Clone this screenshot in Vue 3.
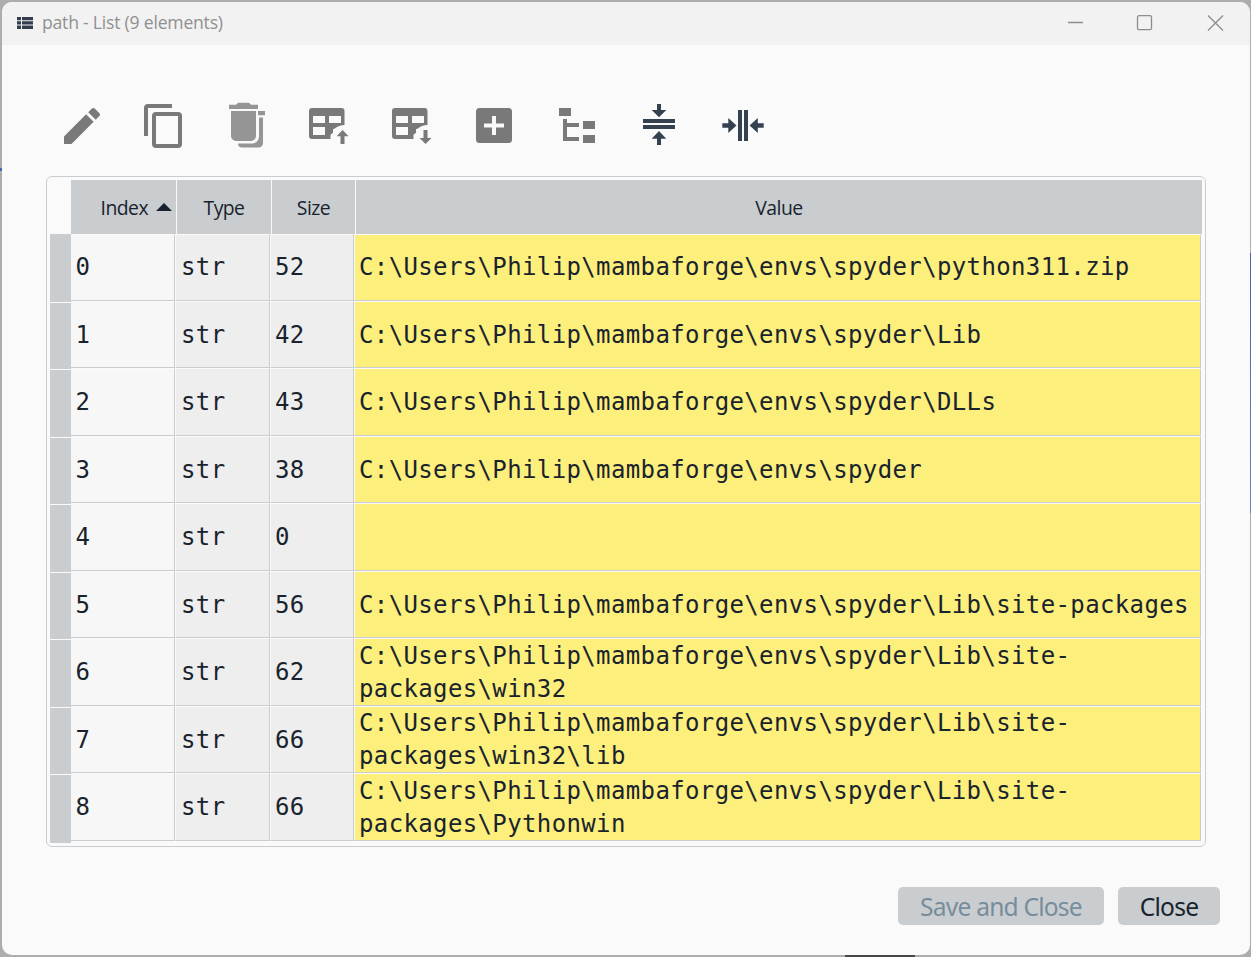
<script setup>
const base = 'C:\\Users\\Philip\\mambaforge\\envs\\spyder'
const rows = [
  { size: 52, value: base + '\\python311.zip' },
  { size: 42, value: base + '\\Lib' },
  { size: 43, value: base + '\\DLLs' },
  { size: 38, value: base },
  { size: 0, value: '' },
  { size: 56, value: base + '\\Lib\\site-packages' },
  { size: 62, value: base + '\\Lib\\site-\npackages\\win32' },
  { size: 66, value: base + '\\Lib\\site-\npackages\\win32\\lib' },
  { size: 66, value: base + '\\Lib\\site-\npackages\\Pythonwin' },
]
</script>

<template>
  <div class="desktop">
    <div class="window">
      <header class="titlebar">
        <svg class="list-icon" width="16" height="12" viewBox="0 0 16 12">
          <path d="M0 0h4v3.3H0zM5 0h11v3.3H5zM0 4.3h4v3.3H0zM5 4.3h11v3.3H5zM0 8.6h4V12H0zM5 8.6h11V12H5z" />
        </svg>
        <span class="title">path - List (9 elements)</span>
        <svg class="controls" width="157" height="16" viewBox="0 0 157 16">
          <path d="M0 7.500h15" />
          <rect x="69.5" y=".7" width="14" height="14" rx="1.5" />
          <path d="M140 .5l15 15M155 .5l-15 15" />
        </svg>
      </header>

      <nav class="toolbar">
        <svg viewBox="0 0 24 24"><path d="M20.71 7.04c.39-.39.39-1.04 0-1.41l-2.34-2.34c-.37-.39-1.02-.39-1.41 0l-1.84 1.83 3.75 3.75M3 17.25V21h3.750L17.81 9.93l-3.750-3.750z" /></svg>
        <svg viewBox="0 0 24 24"><path d="M19 21H8V7h11m0-2H8a2 2 0 0 0-2 2v14a2 2 0 0 0 2 2h11a2 2 0 0 0 2-2V7a2 2 0 0 0-2-2m-3-4H4a2 2 0 0 0-2 2v14h2V3h12z" /></svg>
        <svg class="light" viewBox="0 0 48 48"><path d="M6 2.700h7l2-2h11l2 2h7V7H6zM8 9h25v25a5 5 0 0 1-5 5H13a5 5 0 0 1-5-5zM35 9h7v4.300h-7zM36 15.500h4V41a4.500 4.500 0 0 1-4.500 4.500H19a4 4 0 0 1-4-4h14a7 7 0 0 0 7-7z" /></svg>
        <svg viewBox="0 0 48 48"><path fill-rule="evenodd" d="M4 9a3 3 0 0 1 3-3h29.500a3 3 0 0 1 3 3v14q-5.500 0-10.500 4h-1v4q-2.500 1-2.500 2v4H7a3 3 0 0 1-3-3zM8 14v7h12v-7zM24 14v7h12v-7zM8 25v8h12v-8z" /><path d="M37.600 28l5.900 6.200h-4V42h-4v-7.800h-3.900z" /></svg>
        <svg viewBox="0 0 48 48"><path fill-rule="evenodd" d="M4 9a3 3 0 0 1 3-3h29.500a3 3 0 0 1 3 3v14q-5.500 0-10.500 4h-1v4q-2.500 1-2.500 2v4H7a3 3 0 0 1-3-3zM8 14v7h12v-7zM24 14v7h12v-7zM8 25v8h12v-8z" /><path d="M37.600 42l5.900-6h-4v-8h-4v8h-3.900z" /></svg>
        <svg viewBox="0 0 48 48"><path fill-rule="evenodd" d="M9.500 6h29A3.500 3.500 0 0 1 42 9.500v28A3.500 3.500 0 0 1 38.500 41h-29A3.500 3.500 0 0 1 6 37.500v-28A3.500 3.500 0 0 1 9.500 6zM22 14v7.500h-8v4h8V33h4v-7.500h8v-4h-8V14z" /></svg>
        <svg viewBox="0 0 48 48"><path d="M6 6h12v8H6zM10 17h4v4h12v4H14v10h12v4H10zM30 19h12v8H30zM30 33h12v8H30z" /></svg>
        <svg class="dark" viewBox="0 0 48 48"><path d="M8 17h32v4H8zM8 23h32v4H8zM22 2h4v6h5.300L24 15.200 16.700 8H22zM24 29l7.300 7.800H26V43h-4v-6.200h-5.300z" /></svg>
        <svg class="dark" viewBox="0 0 48 48"><path d="M20 8h4v31h-4zM26 8h4v31h-4zM4.300 21.300h6V16l8.200 7.500-8.200 7.500v-5.300h-6zM45.700 21.300h-5.900V16l-8.200 7.500 8.200 7.500v-5.300h5.900z" /></svg>
      </nav>

      <section class="table-frame">
        <div class="row-heads"><i v-for="(r, i) in rows" :key="i"></i></div>
        <div class="table">
          <div class="head">
            <div class="sorted"><span>Index</span><svg width="16" height="8" viewBox="0 0 16 8"><path d="M0 8L8 0l8 8z" /></svg></div>
            <div><span>Type</span></div>
            <div><span>Size</span></div>
            <div><span>Value</span></div>
          </div>
          <div v-for="(r, i) in rows" :key="i" class="row">
            <div class="index">{{ i }}</div>
            <div class="type">str</div>
            <div class="size">{{ r.size }}</div>
            <div class="value">{{ r.value }}</div>
          </div>
        </div>
      </section>

      <footer class="actions">
        <button class="save" disabled><span>Save and Close</span></button>
        <button class="close"><span>Close</span></button>
      </footer>
    </div>
  </div>
</template>

<style>
body { margin: 0; overflow: hidden; }
</style>

<style scoped>
* { box-sizing: border-box; }
.desktop {
  width: 1251px;
  height: 957px;
  padding: 2px 1px 2px 2px;
  background:
    linear-gradient(#444744, #444744) 845px 955px / 70px 2px no-repeat,
    linear-gradient(#3d6fb5, #3d6fb5) 0 168px / 2px 3px no-repeat,
    linear-gradient(#4a6394, #6986b8) 1250px 253px / 1px 260px no-repeat,
    #adadad;
  font-family: "Noto Sans", "Open Sans", sans-serif;
}
.window {
  width: 1248px;
  height: 953px;
  border-radius: 10px;
  background: #fafafa;
  overflow: hidden;
}
.titlebar {
  display: flex;
  align-items: center;
  height: 43px;
  padding: 0 25px 2px 15px;
  background: #f2f2f2;
}
.list-icon { width: 16px; fill: #323e4e; flex: none; }
.title {
  margin: 0 0 1px 9px;
  font-family: "Open Sans", sans-serif;
  font-size: 17.6px;
  letter-spacing: -0.22px;
  color: #909090;
  white-space: nowrap;
}
.controls { margin-left: auto; fill: none; stroke: #8c8c8c; stroke-width: 1.3; }
.toolbar {
  display: grid;
  grid-template-columns: 82px 83px 82px 83px 82px 83px 82px 83px 48px;
  margin: 57px 0 0 56px;
}
.toolbar svg { width: 48px; height: 48px; fill: #797979; }
.toolbar .light { fill: #959595; }
.toolbar .dark { fill: #354151; }
.table-frame {
  display: flex;
  width: 1160px;
  height: 671px;
  margin: 26px 0 0 44px;
  padding: 3px;
  border: 1px solid #c9cdd0;
  border-radius: 6px;
}
.row-heads {
  width: 21px;
  padding-top: 54px;
}
.row-heads i {
  display: block;
  height: 67.5px;
  background: #c9cdd0;
  border-bottom: 1px solid #fafafa;
}
.row-heads i:first-child { height: 68.5px; }
.row-heads i:last-child { height: 68px; border-bottom: 0; }
.table { width: 1131px; }
.head {
  display: grid;
  grid-template-columns: 105px 94px 83px 846px;
  column-gap: 1px;
  width: 1131px;
  height: 54px;
  font-family: "Open Sans", sans-serif;
  font-size: 19.4px;
  letter-spacing: -0.55px;
  color: #19232d;
}
.head div {
  display: flex;
  align-items: center;
  justify-content: center;
  background: #c9cdd0;
}
.head .sorted { justify-content: flex-end; padding-right: 4px; }
.sorted svg { margin-left: 8px; margin-bottom: 1px; fill: #19232d; }
.row {
  display: grid;
  grid-template-columns: 104px 95px 84px 847px;
  grid-template-rows: 100%;
  height: 67px;
  font-family: "DejaVu Sans Mono", monospace;
  font-size: 24px;
  letter-spacing: 0.37px;
  line-height: 33px;
  color: #19232d;
}
.row:nth-child(2n + 4) { height: 68px; }
.row div {
  display: flex;
  align-items: center;
  border: 1px solid #fafafa;
  border-right-color: #c9cdd0;
  border-bottom-color: #c9cdd0;
  white-space: pre;
}
.row:nth-child(3) div,
.row:nth-child(5) div,
.row:nth-child(7) div,
.row:nth-child(9) div { padding-top: 1px; }
.row:nth-child(8) .value,
.row:nth-child(10) .value { padding-top: 2px; }
.row .index { border-left: 0; padding-left: 4.5px; background: #f7f7f7; }
.row .type { padding-left: 5px; background: #eee; }
.row .size { padding-left: 4px; background: #eee; }
.row .value { padding-left: 4px; background: #fdef7c; }
.actions {
  display: flex;
  justify-content: flex-end;
  gap: 14px;
  margin-top: 40px;
  padding-right: 30px;
}
button {
  height: 38px;
  padding: 0;
  border: 0;
  border-radius: 5px;
  background: #c9cdd0;
  font-family: "Noto Sans", sans-serif;
  font-size: 24.6px;
  letter-spacing: -0.8px;
  line-height: 38px;
  white-space: nowrap;
}
.save { width: 206px; color: #788d9c; }
.close { width: 102px; color: #19232d; }
button span { position: relative; top: 1px; }
</style>
